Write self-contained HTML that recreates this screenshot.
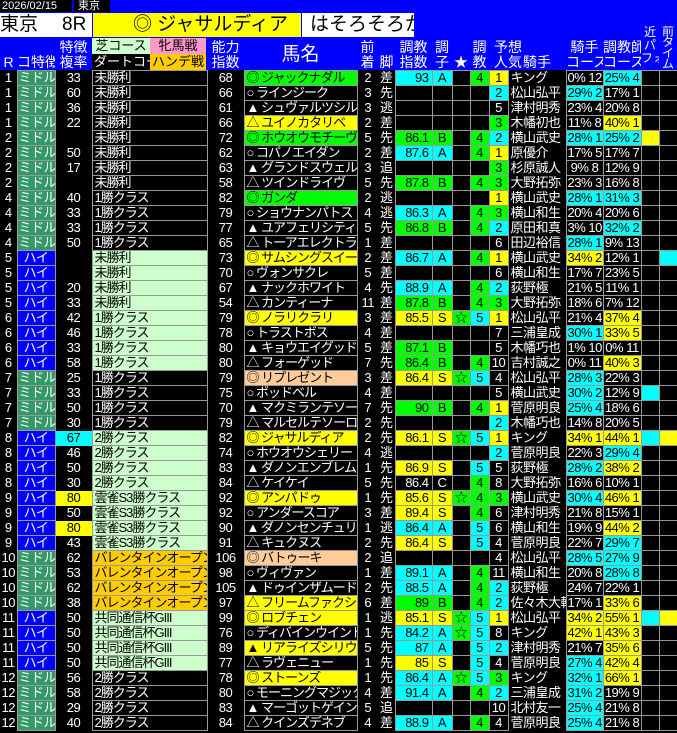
<!DOCTYPE html>
<html><head><meta charset="utf-8">
<style>
*{margin:0;padding:0;box-sizing:border-box}
body{width:677px;height:733px;background:#000;overflow:hidden;font-family:"Liberation Sans","WenQuanYi Zen Hei","Noto Sans CJK JP",sans-serif;color:#fff;position:relative}
.a{position:absolute;white-space:nowrap;overflow:hidden}
.hd{color:#fff;font-size:14px;line-height:15px;text-align:center}
table{position:absolute;left:0;top:70px;border-collapse:collapse;table-layout:fixed;width:677px}
td{height:15px;font-size:13px;line-height:14px;text-align:center;white-space:nowrap;overflow:hidden;padding:0 1px;letter-spacing:-0.5px}
td:nth-child(2),td:nth-child(4),td:nth-child(6),td:nth-child(9),td:nth-child(10),td:nth-child(11),td:nth-child(12),td:nth-child(13),td:nth-child(15),td:nth-child(16),td:nth-child(17),td:nth-child(18){border:1px solid #999}
td:nth-child(4),td:nth-child(6){letter-spacing:-1px}
.t{text-align:left;padding-left:2px}
.r{text-align:right;padding-right:3px}
.g{background:#00ff00;color:#000}.c{background:#00ffff;color:#000}.y{background:#ffff00;color:#000}.o{background:#ffcc99;color:#000}
.l{background:#ccffcc;color:#000}.or{background:#ffcc00;color:#000}.m{background:#339966;color:#fff}.h{background:#0000ff;color:#fff}
</style></head><body>
<div class="a" style="left:0;top:0;width:677px;height:70px;background:#0000ff"></div>
<div class="a" style="left:0;top:0;width:72px;height:12px;background:#000;font-size:11px;line-height:12px;padding-left:2px">2026/02/15</div>
<div class="a" style="left:74px;top:0;width:36px;height:12px;background:#000;font-size:11px;line-height:12px;padding-left:4px">東京</div>
<div class="a" style="left:0;top:13px;width:92px;height:24px;background:#fff;color:#000;font-size:19px;line-height:24px">東京<span style="position:absolute;left:62px">8R</span></div>
<div class="a" style="left:93px;top:13px;width:208px;height:24px;background:#ff0;color:#000;font-size:19px;line-height:24px;padding-left:40px">◎ ジャサルディア</div>
<div class="a" style="left:302px;top:13px;width:112px;height:24px;background:#fff;color:#000;font-size:19px;line-height:24px;padding-left:8px">はそろそろか</div>
<div class="a hd" style="left:0;top:55px;width:17px">R</div>
<div class="a hd" style="left:17px;top:55px;width:38px">コ特徴</div>
<div class="a hd" style="left:55px;top:40px;width:37px">特徴<br>複率</div>
<div class="a" style="left:92px;top:38px;width:58px;height:16px;background:#ccffcc;color:#000;font-size:13px;line-height:16px;text-align:center">芝コース</div>
<div class="a" style="left:150px;top:38px;width:56px;height:16px;background:#ff99cc;color:#000;font-size:13px;line-height:16px;text-align:center">牝馬戦</div>
<div class="a" style="left:92px;top:54px;width:58px;height:16px;background:#000;color:#fff;font-size:13px;line-height:16px;padding-left:2px">ダートコース</div>
<div class="a" style="left:150px;top:54px;width:56px;height:16px;background:#ffcc00;color:#000;font-size:13px;line-height:16px;text-align:center">ハンデ戦</div>
<div class="a hd" style="left:207px;top:40px;width:37px">能力<br>指数</div>
<div class="a hd" style="left:244px;top:44px;width:113px;font-size:19px;line-height:22px">馬名</div>
<div class="a hd" style="left:357px;top:40px;width:21px">前<br>着</div>
<div class="a hd" style="left:378px;top:55px;width:17px">脚</div>
<div class="a hd" style="left:395px;top:40px;width:37px">調教<br>指数</div>
<div class="a hd" style="left:432px;top:40px;width:20px">調<br>子</div>
<div class="a hd" style="left:452px;top:55px;width:18px">★</div>
<div class="a hd" style="left:470px;top:40px;width:19px">調<br>教</div>
<div class="a hd" style="left:489px;top:40px;width:38px">予想<br>人気</div>
<div class="a hd" style="left:508px;top:55px;width:58px">騎手</div>
<div class="a hd" style="left:566px;top:40px;width:37px">騎手<br>コース</div>
<div class="a hd" style="left:603px;top:40px;width:38px">調教師<br>コース</div>
<div class="a hd" style="left:641px;top:26px;width:18px;font-size:12px;line-height:13px">近<br>パ<br>フォ</div>
<div class="a hd" style="left:659px;top:26px;width:18px;font-size:12px;line-height:11px">前<br>タ<br>イ<br>ム</div>
<table>
<colgroup><col style="width:17px"><col style="width:38px"><col style="width:37px"><col style="width:115px"><col style="width:37px"><col style="width:113px"><col style="width:21px"><col style="width:17px"><col style="width:37px"><col style="width:20px"><col style="width:18px"><col style="width:19px"><col style="width:19px"><col style="width:58px"><col style="width:37px"><col style="width:38px"><col style="width:18px"><col style="width:18px"></colgroup>
<tr><td>1</td><td class="m">ミドル</td><td>33</td><td class="t">未勝利</td><td>68</td><td class="t g">◎ ジャックナダル</td><td>2</td><td>差</td><td class="r c">93</td><td class="c">A</td><td></td><td class="g">4</td><td class="y">1</td><td class="t">キング</td><td>0% 12</td><td class="c">25% 4</td><td></td><td></td></tr>
<tr><td>1</td><td class="m">ミドル</td><td>60</td><td class="t">未勝利</td><td>66</td><td class="t">○ ラインジーク</td><td>3</td><td>先</td><td></td><td></td><td></td><td></td><td class="c">2</td><td class="t">松山弘平</td><td class="c">29% 2</td><td>17% 1</td><td></td><td></td></tr>
<tr><td>1</td><td class="m">ミドル</td><td>36</td><td class="t">未勝利</td><td>61</td><td class="t">▲ シュヴァルツシルト</td><td>3</td><td>逃</td><td></td><td></td><td></td><td></td><td>5</td><td class="t">津村明秀</td><td>23% 4</td><td>20% 8</td><td></td><td></td></tr>
<tr><td>1</td><td class="m">ミドル</td><td>22</td><td class="t">未勝利</td><td>66</td><td class="t y">△ ユイノカタリベ</td><td>2</td><td>差</td><td></td><td></td><td></td><td></td><td class="g">3</td><td class="t">木幡初也</td><td>11% 8</td><td class="y">40% 1</td><td></td><td></td></tr>
<tr><td>2</td><td class="m">ミドル</td><td></td><td class="t">未勝利</td><td>72</td><td class="t g">◎ ホウオウモチーヴ</td><td>5</td><td>先</td><td class="r g">86.1</td><td class="g">B</td><td></td><td class="g">4</td><td class="c">2</td><td class="t">横山武史</td><td class="c">28% 1</td><td class="c">25% 2</td><td class="y"></td><td></td></tr>
<tr><td>2</td><td class="m">ミドル</td><td>50</td><td class="t">未勝利</td><td>62</td><td class="t">○ コパノエイダン</td><td>2</td><td>差</td><td class="r c">87.6</td><td class="c">A</td><td></td><td class="g">4</td><td class="y">1</td><td class="t">原優介</td><td>17% 5</td><td>17% 7</td><td></td><td></td></tr>
<tr><td>2</td><td class="m">ミドル</td><td>17</td><td class="t">未勝利</td><td>63</td><td class="t">▲ グランドスウェル</td><td>3</td><td>追</td><td></td><td></td><td></td><td></td><td class="g">3</td><td class="t">杉原誠人</td><td>9% 8</td><td>12% 9</td><td></td><td></td></tr>
<tr><td>2</td><td class="m">ミドル</td><td></td><td class="t">未勝利</td><td>58</td><td class="t">△ ツインドライヴ</td><td>5</td><td>先</td><td class="r g">87.8</td><td class="g">B</td><td></td><td class="g">4</td><td class="g">3</td><td class="t">大野拓弥</td><td>23% 3</td><td>16% 8</td><td></td><td></td></tr>
<tr><td>4</td><td class="m">ミドル</td><td>40</td><td class="t">1勝クラス</td><td>82</td><td class="t g">◎ ガンダ</td><td>2</td><td>逃</td><td></td><td></td><td></td><td></td><td class="y">1</td><td class="t">横山武史</td><td class="c">28% 1</td><td class="c">31% 3</td><td></td><td></td></tr>
<tr><td>4</td><td class="m">ミドル</td><td>33</td><td class="t">1勝クラス</td><td>79</td><td class="t">○ ショウナンパトス</td><td>4</td><td>逃</td><td class="r c">86.3</td><td class="c">A</td><td></td><td class="g">4</td><td class="g">3</td><td class="t">横山和生</td><td>20% 4</td><td>20% 6</td><td></td><td></td></tr>
<tr><td>4</td><td class="m">ミドル</td><td>33</td><td class="t">1勝クラス</td><td>77</td><td class="t">▲ ユアフェリシティ</td><td>5</td><td>先</td><td class="r g">86.8</td><td class="g">B</td><td></td><td class="g">4</td><td class="c">2</td><td class="t">原田和真</td><td>3% 10</td><td class="c">32% 2</td><td></td><td></td></tr>
<tr><td>4</td><td class="m">ミドル</td><td>50</td><td class="t">1勝クラス</td><td>65</td><td class="t">△ トーアエレクトラム</td><td>1</td><td>差</td><td></td><td></td><td></td><td></td><td>6</td><td class="t">田辺裕信</td><td class="c">28% 1</td><td>9% 13</td><td></td><td></td></tr>
<tr><td>5</td><td class="h">ハイ</td><td></td><td class="t l">未勝利</td><td>73</td><td class="t y">◎ サムシングスイート</td><td>2</td><td>差</td><td class="r c">86.7</td><td class="c">A</td><td></td><td class="g">4</td><td class="y">1</td><td class="t">横山武史</td><td class="y">34% 2</td><td>12% 1</td><td></td><td class="c"></td></tr>
<tr><td>5</td><td class="h">ハイ</td><td></td><td class="t l">未勝利</td><td>70</td><td class="t">○ ヴォンサクレ</td><td>5</td><td>差</td><td></td><td></td><td></td><td></td><td>6</td><td class="t">横山和生</td><td>17% 7</td><td>23% 5</td><td></td><td></td></tr>
<tr><td>5</td><td class="h">ハイ</td><td>20</td><td class="t l">未勝利</td><td>67</td><td class="t">▲ ナックホワイト</td><td>4</td><td>先</td><td class="r c">88.9</td><td class="c">A</td><td></td><td class="g">4</td><td class="c">2</td><td class="t">荻野極</td><td>21% 5</td><td>11% 1</td><td></td><td></td></tr>
<tr><td>5</td><td class="h">ハイ</td><td>33</td><td class="t l">未勝利</td><td>54</td><td class="t">△ カンティーナ</td><td>11</td><td>差</td><td class="r g">87.8</td><td class="g">B</td><td></td><td class="g">4</td><td class="g">3</td><td class="t">大野拓弥</td><td>18% 6</td><td>7% 12</td><td></td><td></td></tr>
<tr><td>6</td><td class="h">ハイ</td><td>42</td><td class="t l">1勝クラス</td><td>79</td><td class="t y">◎ ノラリクラリ</td><td>3</td><td>差</td><td class="r y">85.5</td><td class="y">S</td><td class="g">☆</td><td class="c">5</td><td class="y">1</td><td class="t">松山弘平</td><td>21% 4</td><td class="y">37% 4</td><td></td><td></td></tr>
<tr><td>6</td><td class="h">ハイ</td><td>46</td><td class="t l">1勝クラス</td><td>78</td><td class="t">○ トラストボス</td><td>4</td><td>差</td><td></td><td></td><td></td><td></td><td>7</td><td class="t">三浦皇成</td><td class="c">30% 1</td><td class="y">33% 5</td><td></td><td></td></tr>
<tr><td>6</td><td class="h">ハイ</td><td>33</td><td class="t l">1勝クラス</td><td>80</td><td class="t">▲ キョウエイグッド</td><td>5</td><td>差</td><td class="r g">87.1</td><td class="g">B</td><td></td><td></td><td>5</td><td class="t">木幡巧也</td><td>1% 10</td><td>0% 11</td><td></td><td></td></tr>
<tr><td>6</td><td class="h">ハイ</td><td>58</td><td class="t l">1勝クラス</td><td>80</td><td class="t">△ フォーゲッド</td><td>7</td><td>先</td><td class="r g">86.4</td><td class="g">B</td><td></td><td class="g">4</td><td>10</td><td class="t">吉村誠之</td><td>0% 11</td><td class="y">40% 3</td><td></td><td></td></tr>
<tr><td>7</td><td class="m">ミドル</td><td>25</td><td class="t">1勝クラス</td><td>79</td><td class="t o">◎ リプレゼント</td><td>3</td><td>差</td><td class="r y">86.4</td><td class="y">S</td><td class="g">☆</td><td class="c">5</td><td>4</td><td class="t">松山弘平</td><td class="c">28% 3</td><td>22% 3</td><td></td><td></td></tr>
<tr><td>7</td><td class="m">ミドル</td><td>33</td><td class="t">1勝クラス</td><td>75</td><td class="t">○ ポッドベル</td><td>4</td><td>差</td><td></td><td></td><td></td><td></td><td>5</td><td class="t">横山武史</td><td class="c">30% 2</td><td>12% 9</td><td class="c"></td><td></td></tr>
<tr><td>7</td><td class="m">ミドル</td><td>50</td><td class="t">1勝クラス</td><td>70</td><td class="t">▲ マクミランテソーロ</td><td>7</td><td>先</td><td class="r g">90</td><td class="g">B</td><td></td><td class="g">4</td><td class="y">1</td><td class="t">菅原明良</td><td class="c">25% 4</td><td>18% 6</td><td></td><td></td></tr>
<tr><td>7</td><td class="m">ミドル</td><td>30</td><td class="t">1勝クラス</td><td>79</td><td class="t">△ マルセルテソーロ</td><td>2</td><td>先</td><td></td><td></td><td></td><td></td><td class="c">2</td><td class="t">木幡巧也</td><td>14% 8</td><td>20% 5</td><td></td><td></td></tr>
<tr><td>8</td><td class="h">ハイ</td><td class="c">67</td><td class="t l">2勝クラス</td><td>82</td><td class="t y">◎ ジャサルディア</td><td>2</td><td>先</td><td class="r y">86.1</td><td class="y">S</td><td class="g">☆</td><td class="c">5</td><td class="y">1</td><td class="t">キング</td><td class="y">34% 1</td><td class="y">44% 1</td><td class="c"></td><td class="y"></td></tr>
<tr><td>8</td><td class="h">ハイ</td><td>46</td><td class="t l">2勝クラス</td><td>74</td><td class="t">○ ホウオウシェリー</td><td>4</td><td>逃</td><td></td><td></td><td></td><td></td><td class="c">2</td><td class="t">菅原明良</td><td>22% 3</td><td class="c">29% 4</td><td></td><td></td></tr>
<tr><td>8</td><td class="h">ハイ</td><td>50</td><td class="t l">2勝クラス</td><td>83</td><td class="t">▲ ダノンエンブレム</td><td>1</td><td>先</td><td class="r y">86.9</td><td class="y">S</td><td></td><td class="c">5</td><td>5</td><td class="t">荻野極</td><td class="c">28% 2</td><td class="y">38% 2</td><td></td><td></td></tr>
<tr><td>8</td><td class="h">ハイ</td><td>30</td><td class="t l">2勝クラス</td><td>84</td><td class="t">△ ケイケイ</td><td>5</td><td>先</td><td class="r">86.4</td><td>C</td><td></td><td class="g">4</td><td>8</td><td class="t">大野拓弥</td><td>16% 6</td><td>10% 1</td><td></td><td></td></tr>
<tr><td>9</td><td class="h">ハイ</td><td class="y">80</td><td class="t l">雲雀S3勝クラス</td><td>92</td><td class="t y">◎ アンパドゥ</td><td>1</td><td>先</td><td class="r y">85.6</td><td class="y">S</td><td class="g">☆</td><td class="g">4</td><td class="g">3</td><td class="t">横山武史</td><td class="c">30% 4</td><td class="y">46% 1</td><td></td><td></td></tr>
<tr><td>9</td><td class="h">ハイ</td><td>50</td><td class="t l">雲雀S3勝クラス</td><td>92</td><td class="t">○ アンダースコア</td><td>3</td><td>差</td><td class="r y">89.4</td><td class="y">S</td><td></td><td class="g">4</td><td>6</td><td class="t">津村明秀</td><td>21% 8</td><td>15% 1</td><td></td><td></td></tr>
<tr><td>9</td><td class="h">ハイ</td><td class="y">80</td><td class="t l">雲雀S3勝クラス</td><td>90</td><td class="t">▲ ダノンセンチュリー</td><td>1</td><td>逃</td><td class="r c">86.4</td><td class="c">A</td><td></td><td class="c">5</td><td>6</td><td class="t">横山和生</td><td>19% 9</td><td class="y">44% 2</td><td></td><td></td></tr>
<tr><td>9</td><td class="h">ハイ</td><td>43</td><td class="t l">雲雀S3勝クラス</td><td>91</td><td class="t">△ キュクヌス</td><td>2</td><td>先</td><td class="r y">86.4</td><td class="y">S</td><td></td><td class="c">5</td><td>4</td><td class="t">菅原明良</td><td>22% 7</td><td class="c">29% 7</td><td></td><td></td></tr>
<tr><td>10</td><td class="m">ミドル</td><td>62</td><td class="t or">バレンタインオープン</td><td>106</td><td class="t o">◎ バトゥーキ</td><td>2</td><td>追</td><td></td><td></td><td></td><td></td><td>4</td><td class="t">松山弘平</td><td class="c">28% 5</td><td class="c">27% 9</td><td></td><td></td></tr>
<tr><td>10</td><td class="m">ミドル</td><td>53</td><td class="t or">バレンタインオープン</td><td>98</td><td class="t">○ ヴィヴァン</td><td>1</td><td>差</td><td class="r c">89.1</td><td class="c">A</td><td></td><td class="g">4</td><td>11</td><td class="t">横山和生</td><td>20% 8</td><td class="c">28% 8</td><td></td><td></td></tr>
<tr><td>10</td><td class="m">ミドル</td><td>62</td><td class="t or">バレンタインオープン</td><td>105</td><td class="t">▲ ドゥインザムード</td><td>2</td><td>先</td><td class="r c">88.5</td><td class="c">A</td><td></td><td class="g">4</td><td class="c">2</td><td class="t">荻野極</td><td>24% 7</td><td>22% 1</td><td></td><td></td></tr>
<tr><td>10</td><td class="m">ミドル</td><td>38</td><td class="t or">バレンタインオープン</td><td>97</td><td class="t y">△ フリームファクシ</td><td>6</td><td>差</td><td class="r g">89</td><td class="g">B</td><td></td><td class="g">4</td><td class="c">2</td><td class="t">佐々木大輔</td><td>17% 1</td><td class="y">33% 6</td><td></td><td></td></tr>
<tr><td>11</td><td class="h">ハイ</td><td>50</td><td class="t l">共同通信杯GIII</td><td>99</td><td class="t y">◎ ロブチェン</td><td>1</td><td>逃</td><td class="r y">85.1</td><td class="y">S</td><td class="g">☆</td><td class="c">5</td><td class="y">1</td><td class="t">松山弘平</td><td class="y">34% 2</td><td class="y">55% 1</td><td class="c"></td><td class="y"></td></tr>
<tr><td>11</td><td class="h">ハイ</td><td>50</td><td class="t l">共同通信杯GIII</td><td>76</td><td class="t">○ ディバインウインド</td><td>1</td><td>先</td><td class="r c">84.2</td><td class="c">A</td><td class="g">☆</td><td class="c">5</td><td>8</td><td class="t">キング</td><td class="y">42% 1</td><td class="y">43% 3</td><td></td><td></td></tr>
<tr><td>11</td><td class="h">ハイ</td><td>50</td><td class="t l">共同通信杯GIII</td><td>89</td><td class="t y">▲ リアライズシリウス</td><td>5</td><td>先</td><td class="r c">87</td><td class="c">A</td><td></td><td class="c">5</td><td class="c">2</td><td class="t">津村明秀</td><td>21% 7</td><td class="y">35% 6</td><td></td><td></td></tr>
<tr><td>11</td><td class="h">ハイ</td><td>50</td><td class="t l">共同通信杯GIII</td><td>77</td><td class="t">△ ラヴェニュー</td><td>1</td><td>先</td><td class="r y">85</td><td class="y">S</td><td></td><td class="c">5</td><td>4</td><td class="t">菅原明良</td><td class="c">27% 4</td><td class="y">42% 4</td><td></td><td></td></tr>
<tr><td>12</td><td class="m">ミドル</td><td>56</td><td class="t">2勝クラス</td><td>78</td><td class="t y">◎ ストーンズ</td><td>1</td><td>先</td><td class="r c">86.4</td><td class="c">A</td><td class="g">☆</td><td class="c">5</td><td class="g">3</td><td class="t">キング</td><td class="c">32% 1</td><td class="y">66% 1</td><td></td><td></td></tr>
<tr><td>12</td><td class="m">ミドル</td><td>58</td><td class="t">2勝クラス</td><td>80</td><td class="t">○ モーニングマジック</td><td>4</td><td>差</td><td class="r c">91.4</td><td class="c">A</td><td></td><td class="g">4</td><td class="c">2</td><td class="t">三浦皇成</td><td class="c">31% 2</td><td>19% 9</td><td></td><td></td></tr>
<tr><td>12</td><td class="m">ミドル</td><td>29</td><td class="t">2勝クラス</td><td>83</td><td class="t">▲ マーゴットゲイン</td><td>5</td><td>追</td><td></td><td></td><td></td><td></td><td>10</td><td class="t">北村友一</td><td class="c">25% 4</td><td>21% 8</td><td></td><td></td></tr>
<tr><td>12</td><td class="m">ミドル</td><td>40</td><td class="t">2勝クラス</td><td>84</td><td class="t">△ クインズデネブ</td><td>4</td><td>差</td><td class="r c">88.9</td><td class="c">A</td><td></td><td class="g">4</td><td>4</td><td class="t">菅原明良</td><td class="c">25% 4</td><td>21% 8</td><td></td><td></td></tr>
</table>
</body></html>
